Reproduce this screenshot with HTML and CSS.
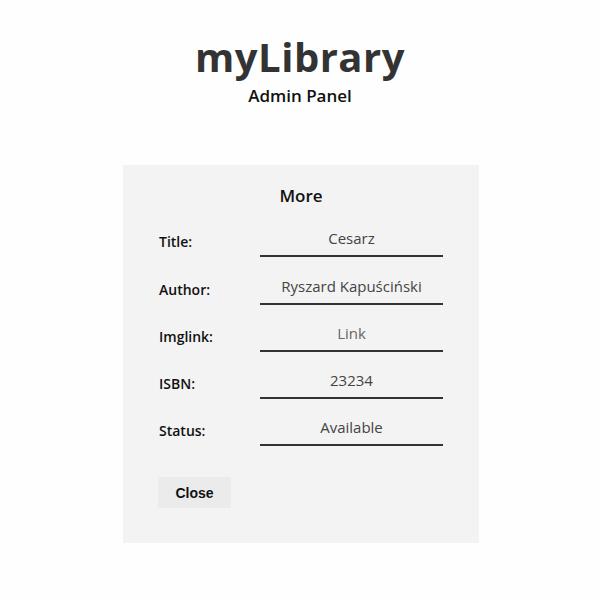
FILE: index.html
```html
<!DOCTYPE html>
<html lang="pl">
<head>
<meta charset="utf-8">
<title>myLibrary</title>
<link rel="stylesheet" href="styles.css">
</head>
<body>
<header class="header">
  <h1 class="logo">myLibrary</h1>
  <p class="subtitle">Admin Panel</p>
</header>
<main class="panel">
  <h2 class="panel-title">More</h2>
  <form class="form">
    <div class="row"><label class="label">Title:</label><input class="field" value="Cesarz"></div>
    <div class="row"><label class="label">Author:</label><input class="field" value="Ryszard Kapuściński"></div>
    <div class="row"><label class="label">Imglink:</label><input class="field field-link" value="Link"></div>
    <div class="row"><label class="label">ISBN:</label><input class="field" value="23234"></div>
    <div class="row"><label class="label">Status:</label><input class="field" value="Available"></div>
    <button type="button" class="btn">Close</button>
  </form>
</main>
</body>
</html>
```
FILE: styles.css
```css
html, body { margin: 0; padding: 0; background: #fefefe; }
body { font-family: "Open Sans", "DejaVu Sans", sans-serif; color: #111; }
.header { text-align: center; padding-top: 33px; }
.logo { margin: 0; font-size: 40px; line-height: 48px; font-weight: 700; color: #333; letter-spacing: 0.5px; }
.subtitle { margin: 4px 0 0; font-size: 17px; line-height: 22px; font-weight: 600; color: #111; }
.panel { width: 356px; margin: 58px 0 0 calc(50% - 177px); background: #f3f3f3; padding: 20px 36px 35px; box-sizing: border-box; }
.panel-title { margin: 0; text-align: center; font-size: 17px; line-height: 22px; font-weight: 600; color: #111; }
.form { display: flex; flex-direction: column; margin-top: 3px; }
.row { display: flex; align-items: flex-end; height: 47.25px; }
.label { width: 101px; font-size: 14px; font-weight: 600; padding-bottom: 6px; }
.field { width: 183px; box-sizing: border-box; border: 0; border-bottom: 2px solid #333; background: transparent; text-align: center; font-family: inherit; font-size: 15px; color: #444; padding: 0 0 7px; outline: none; }
.field-link { color: #666; }
.btn { align-self: flex-start; margin: 31px 0 0 -1px; width: 73px; height: 31px; border: 0; background: #ebebeb; font-family: "Liberation Sans", Arial, sans-serif; font-weight: 700; font-size: 14px; color: #111; }
```
